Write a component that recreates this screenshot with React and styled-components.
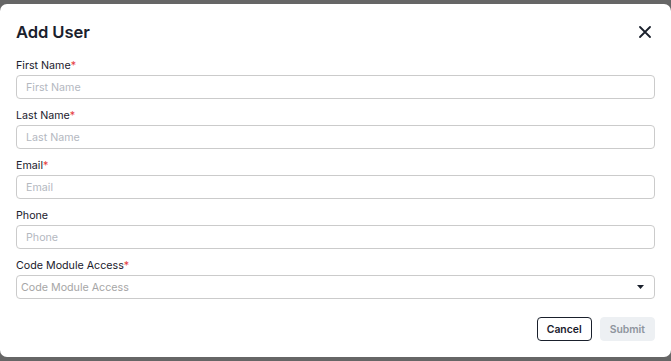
import React from 'react'
import styled, { createGlobalStyle } from 'styled-components'

const GlobalStyle = createGlobalStyle`
  html, body {
    margin: 0;
    padding: 0;
    background: #666666;
    font-family: Inter, "Noto Sans", sans-serif;
  }
  * { box-sizing: border-box; }
`

const Overlay = styled.div`
  width: 671px;
  height: 361px;
  padding: 4px 0;
  display: flex;
  flex-direction: column;
`

const Modal = styled.div`
  flex: 1;
  background: #ffffff;
  border-radius: 7px;
  padding: 16px 16px 16px;
  display: flex;
  flex-direction: column;
`

const Header = styled.div`
  display: flex;
  align-items: center;
  justify-content: space-between;
  height: 24px;
  margin-bottom: 14px;
`

const Title = styled.h2`
  margin: 0;
  font-size: 16.6px;
  font-weight: 600;
  color: #1a202c;
  letter-spacing: -0.1px;
`

const CloseButton = styled.button`
  border: none;
  background: none;
  padding: 0;
  width: 24px;
  height: 24px;
  display: flex;
  align-items: center;
  justify-content: center;
  margin-right: -2px;
  cursor: pointer;
`

const Form = styled.div`
  display: flex;
  flex-direction: column;
  gap: 9px;
`

const Field = styled.div`
  display: flex;
  flex-direction: column;
  gap: 1px;
`

const Label = styled.label`
  font-size: 10.7px;
  line-height: 16px;
  color: #1a202c;
`

const Required = styled.span`
  color: #e53e3e;
`

const Input = styled.input`
  height: 24px;
  width: 100%;
  border: 1px solid #cbcbcb;
  border-radius: 4px;
  padding: 0 9px;
  font-family: inherit;
  font-size: 10.7px;
  color: #1a202c;
  outline: none;
  &::placeholder {
    color: #b4b8bf;
  }
`

const Select = styled.div`
  height: 24px;
  border: 1px solid #cbcbcb;
  border-radius: 4px;
  padding: 0 10px 0 4px;
  display: flex;
  align-items: center;
  justify-content: space-between;
  font-size: 10.7px;
  color: #a6a6a6;
`

const Footer = styled.div`
  margin-top: 18px;
  display: flex;
  justify-content: flex-end;
  gap: 8px;
`

const Button = styled.button`
  height: 24px;
  padding: 0 9px;
  border-radius: 4px;
  font-family: inherit;
  font-size: 10.4px;
  font-weight: 600;
  border: ${p => (p.$outline ? '1px solid #1a202c' : '1px solid #edf0f3')};
  background: ${p => (p.$outline ? '#ffffff' : '#edf0f3')};
  color: ${p => (p.$outline ? '#1a202c' : '#8f959e')};
`

const fields = [
  { id: 1, name: 'First Name', required: true },
  { id: 2, name: 'Last Name', required: true },
  { id: 3, name: 'Email', required: true },
  { id: 4, name: 'Phone', required: false },
]

function App() {
  return (
    <>
      <GlobalStyle />
      <Overlay>
        <Modal>
          <Header>
            <Title>Add User</Title>
            <CloseButton aria-label="Close">
              <svg width="12" height="12" viewBox="0 0 12 12">
                <path d="M1 1L11 11M11 1L1 11" stroke="#1a202c" strokeWidth="1.8" strokeLinecap="round" />
              </svg>
            </CloseButton>
          </Header>
          <Form>
            {fields.map(({ id, name, required }) => (
              <Field key={id}>
                <Label>
                  {name}
                  {required && <Required>*</Required>}
                </Label>
                <Input placeholder={name} />
              </Field>
            ))}
            <Field>
              <Label>
                Code Module Access<Required>*</Required>
              </Label>
              <Select>
                Code Module Access
                <svg width="7" height="4" viewBox="0 0 7 4">
                  <path d="M0 0H7L3.5 4Z" fill="#1a202c" />
                </svg>
              </Select>
            </Field>
          </Form>
          <Footer>
            <Button $outline>Cancel</Button>
            <Button disabled>Submit</Button>
          </Footer>
        </Modal>
      </Overlay>
    </>
  )
}

export default App
